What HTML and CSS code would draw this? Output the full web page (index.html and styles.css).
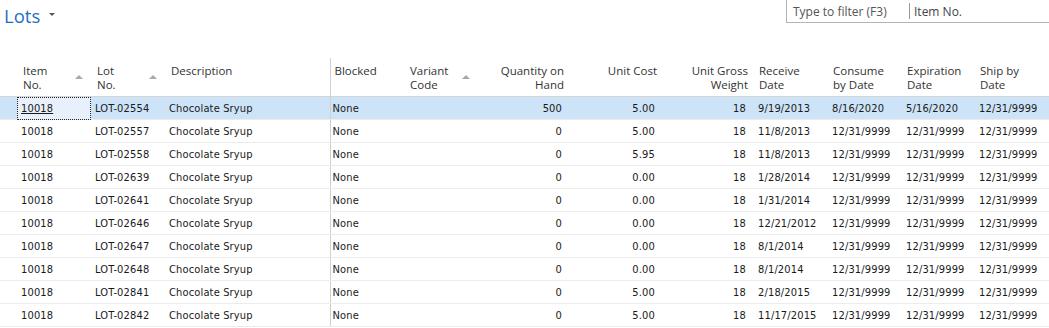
FILE: index.html
```html
<!DOCTYPE html>
<html>
<head>
<meta charset="utf-8">
<link rel="stylesheet" href="styles.css">
</head>
<body>
<div class="topbar">
  <div class="title">Lots <span class="caret"></span></div>
  <div class="filter">
    <span class="ph">Type to filter (F3)</span>
    <span class="sep"></span>
    <span class="field">Item No.</span>
  </div>
</div>
<table class="grid">
  <colgroup>
    <col class="c0"><col class="c1"><col class="c2"><col class="c3"><col class="c4"><col class="c5"><col class="c6"><col class="c7"><col class="c8"><col class="c9"><col class="c10"><col class="c11"><col class="c12">
  </colgroup>
  <thead>
    <tr>
      <th></th>
      <th><div class="h">Item<br>No.</div><span class="sort"></span></th>
      <th><div class="h">Lot<br>No.</div><span class="sort"></span></th>
      <th><div class="h">Description</div></th>
      <th class="div"><div class="h">Blocked</div></th>
      <th><div class="h">Variant<br>Code</div><span class="sort"></span></th>
      <th class="r"><div class="h">Quantity on<br>Hand</div></th>
      <th class="r"><div class="h">Unit Cost</div></th>
      <th class="r"><div class="h">Unit Gross<br>Weight</div></th>
      <th class="d"><div class="h">Receive<br>Date</div></th>
      <th class="d"><div class="h">Consume<br>by Date</div></th>
      <th class="d"><div class="h">Expiration<br>Date</div></th>
      <th class="d"><div class="h">Ship by<br>Date</div></th>
    </tr>
  </thead>
  <tbody>
    <tr class="sel">
      <td></td><td class="focus"><span class="link">10018</span></td><td>LOT-02554</td><td>Chocolate Sryup</td><td class="div">None</td><td></td><td class="r">500</td><td class="r">5.00</td><td class="r">18</td><td class="d">9/19/2013</td><td class="d">8/16/2020</td><td class="d">5/16/2020</td><td class="d">12/31/9999</td>
    </tr>
    <tr>
      <td></td><td>10018</td><td>LOT-02557</td><td>Chocolate Sryup</td><td class="div">None</td><td></td><td class="r">0</td><td class="r">5.00</td><td class="r">18</td><td class="d">11/8/2013</td><td class="d">12/31/9999</td><td class="d">12/31/9999</td><td class="d">12/31/9999</td>
    </tr>
    <tr>
      <td></td><td>10018</td><td>LOT-02558</td><td>Chocolate Sryup</td><td class="div">None</td><td></td><td class="r">0</td><td class="r">5.95</td><td class="r">18</td><td class="d">11/8/2013</td><td class="d">12/31/9999</td><td class="d">12/31/9999</td><td class="d">12/31/9999</td>
    </tr>
    <tr>
      <td></td><td>10018</td><td>LOT-02639</td><td>Chocolate Sryup</td><td class="div">None</td><td></td><td class="r">0</td><td class="r">0.00</td><td class="r">18</td><td class="d">1/28/2014</td><td class="d">12/31/9999</td><td class="d">12/31/9999</td><td class="d">12/31/9999</td>
    </tr>
    <tr>
      <td></td><td>10018</td><td>LOT-02641</td><td>Chocolate Sryup</td><td class="div">None</td><td></td><td class="r">0</td><td class="r">0.00</td><td class="r">18</td><td class="d">1/31/2014</td><td class="d">12/31/9999</td><td class="d">12/31/9999</td><td class="d">12/31/9999</td>
    </tr>
    <tr>
      <td></td><td>10018</td><td>LOT-02646</td><td>Chocolate Sryup</td><td class="div">None</td><td></td><td class="r">0</td><td class="r">0.00</td><td class="r">18</td><td class="d">12/21/2012</td><td class="d">12/31/9999</td><td class="d">12/31/9999</td><td class="d">12/31/9999</td>
    </tr>
    <tr>
      <td></td><td>10018</td><td>LOT-02647</td><td>Chocolate Sryup</td><td class="div">None</td><td></td><td class="r">0</td><td class="r">0.00</td><td class="r">18</td><td class="d">8/1/2014</td><td class="d">12/31/9999</td><td class="d">12/31/9999</td><td class="d">12/31/9999</td>
    </tr>
    <tr>
      <td></td><td>10018</td><td>LOT-02648</td><td>Chocolate Sryup</td><td class="div">None</td><td></td><td class="r">0</td><td class="r">0.00</td><td class="r">18</td><td class="d">8/1/2014</td><td class="d">12/31/9999</td><td class="d">12/31/9999</td><td class="d">12/31/9999</td>
    </tr>
    <tr>
      <td></td><td>10018</td><td>LOT-02841</td><td>Chocolate Sryup</td><td class="div">None</td><td></td><td class="r">0</td><td class="r">5.00</td><td class="r">18</td><td class="d">2/18/2015</td><td class="d">12/31/9999</td><td class="d">12/31/9999</td><td class="d">12/31/9999</td>
    </tr>
    <tr>
      <td></td><td>10018</td><td>LOT-02842</td><td>Chocolate Sryup</td><td class="div">None</td><td></td><td class="r">0</td><td class="r">5.00</td><td class="r">18</td><td class="d">11/17/2015</td><td class="d">12/31/9999</td><td class="d">12/31/9999</td><td class="d">12/31/9999</td>
    </tr>
  </tbody>
</table>
</body>
</html>
```

FILE: styles.css
```css
html, body {
  margin: 0;
  padding: 0;
  background: #ffffff;
  overflow: hidden;
}
body {
  width: 1049px;
  height: 328px;
  font-family: "DejaVu Sans Condensed", "DejaVu Sans", sans-serif;
  color: #1a1a1a;
}
.topbar {
  display: flex;
  justify-content: space-between;
  align-items: flex-start;
  height: 58px;
}
.title {
  padding: 3px 0 0 4px;
  font-family: "Open Sans", "Noto Sans", sans-serif;
  font-size: 18.5px;
  line-height: 26px;
  color: #1f6fc1;
  display: flex;
  align-items: center;
}
.caret {
  display: inline-block;
  width: 0;
  height: 0;
  margin-left: 9px;
  margin-top: -4px;
  border-left: 3px solid transparent;
  border-right: 3px solid transparent;
  border-top: 3px solid #555;
}
.filter {
  width: 262px;
  height: 22px;
  border-left: 1px solid #b4b4b4;
  border-bottom: 1px solid #b4b4b4;
  display: flex;
  align-items: center;
  font-family: "Open Sans", "Noto Sans", sans-serif;
  font-size: 12px;
  color: #555;
}
.ph {
  padding-left: 6px;
  width: 116px;
}
.sep {
  width: 1px;
  height: 16px;
  background: #999;
}
.field {
  padding-left: 4px;
  color: #444;
}
.grid {
  border-collapse: collapse;
  table-layout: fixed;
  width: 1049px;
}
.c0 { width: 17px; }
.c1 { width: 74px; }
.c2 { width: 74px; }
.c3 { width: 165px; }
.c4 { width: 74px; }
.c5 { width: 74px; }
.c6 { width: 93px; }
.c7 { width: 93px; }
.c8 { width: 91px; }
.c9 { width: 74px; }
.c10 { width: 74px; }
.c11 { width: 73px; }
.c12 { width: 73px; }
th {
  position: relative;
  height: 38px;
  padding: 0 0 0 6px;
  text-align: left;
  vertical-align: top;
  font-family: "Open Sans", "Noto Sans", sans-serif;
  font-weight: normal;
  font-size: 11.5px;
  color: #333;
  border-bottom: 1px solid #d5d5d5;
}
th .h {
  padding-top: 6px;
  line-height: 14px;
}
th.div {
  padding-left: 4px;
}
th.d {
  padding-left: 4px;
}
th.r {
  text-align: right;
  padding: 0 7px 0 0;
}
.sort {
  position: absolute;
  right: 8px;
  top: 17px;
  width: 0;
  height: 0;
  border-left: 4px solid transparent;
  border-right: 4px solid transparent;
  border-bottom: 4px solid #a8a8a8;
}
.div {
  border-left: 1px solid #d0d0d0;
}
td {
  height: 22px;
  padding: 0 0 0 4px;
  font-size: 11px;
  letter-spacing: 0.15px;
  color: #1a1a1a;
  border-bottom: 1px solid #ececec;
  white-space: nowrap;
  overflow: hidden;
}
td.div {
  padding-left: 2px;
}
td.d {
  padding-left: 3px;
}
td.r {
  text-align: right;
  padding: 0 9px 0 0;
}
tr.sel td {
  background: #cde3f7;
}
tr.sel td.focus {
  background: #e8f1fb;
  outline: 1px dotted #222;
  outline-offset: -1px;
}
.link {
  text-decoration: underline;
}
```
